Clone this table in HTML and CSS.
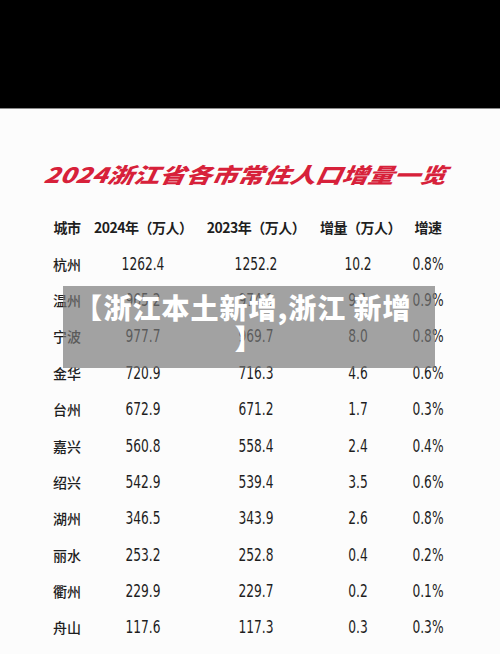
FILE: index.html
```html
<!DOCTYPE html>
<html lang="zh-CN">
<head>
    <meta charset="UTF-8">
    <meta name="viewport" content="width=device-width, initial-scale=1.0">
    <title>2024浙江省各市常住人口增量一览</title>
    <link rel="stylesheet" href="styles.css">
</head>
<body>
    <div class="topbar"></div>
    <div class="sheet">
        <h1 class="title">2024浙江省各市常住人口增量一览</h1>
        <div class="table">
            <div class="row head">
                <span>城市</span>
                <span>2024年（万人）</span>
                <span>2023年（万人）</span>
                <span>增量（万人）</span>
                <span>增速</span>
            </div>
            <div class="row"><span class="city">杭州</span><span>1262.4</span><span>1252.2</span><span>10.2</span><span>0.8%</span></div>
            <div class="row"><span class="city">温州</span><span>965.2</span><span>974.1</span><span>9.1</span><span>0.9%</span></div>
            <div class="row"><span class="city">宁波</span><span>977.7</span><span>969.7</span><span>8.0</span><span>0.8%</span></div>
            <div class="row"><span class="city">金华</span><span>720.9</span><span>716.3</span><span>4.6</span><span>0.6%</span></div>
            <div class="row"><span class="city">台州</span><span>672.9</span><span>671.2</span><span>1.7</span><span>0.3%</span></div>
            <div class="row"><span class="city">嘉兴</span><span>560.8</span><span>558.4</span><span>2.4</span><span>0.4%</span></div>
            <div class="row"><span class="city">绍兴</span><span>542.9</span><span>539.4</span><span>3.5</span><span>0.6%</span></div>
            <div class="row"><span class="city">湖州</span><span>346.5</span><span>343.9</span><span>2.6</span><span>0.8%</span></div>
            <div class="row"><span class="city">丽水</span><span>253.2</span><span>252.8</span><span>0.4</span><span>0.2%</span></div>
            <div class="row"><span class="city">衢州</span><span>229.9</span><span>229.7</span><span>0.2</span><span>0.1%</span></div>
            <div class="row"><span class="city">舟山</span><span>117.6</span><span>117.3</span><span>0.3</span><span>0.3%</span></div>
        </div>
        <div class="caption"><span class="bracket">【</span>浙江本土新增,浙江 新增<br>】</div>
    </div>
</body>
</html>
```

FILE: styles.css
```css
body {
    margin: 0;
    background-color: #fcfcfc;
    font-family: "Noto Sans CJK SC", sans-serif;
    color: #222;
    overflow: hidden;
}
.topbar {
    height: 108px;
    background: #000;
    border-bottom: 1px solid #8a8a8a;
}
.sheet {
    position: relative;
    height: 545px;
    overflow: hidden;
}
.title {
    margin: 0;
    padding-top: 50px;
    height: 30px;
    line-height: 30px;
    font-size: 21px;
    font-weight: 900;
    font-style: italic;
    color: #d7213a;
    text-align: center;
    white-space: nowrap;
    transform: scaleX(1.24) skewX(-8deg);
}
.table {
    margin: 20px 0 0 40px;
}
.row {
    display: grid;
    grid-template-columns: 54px 98px 128px 76px 64px;
    height: 36.4px;
    align-items: center;
    text-align: center;
    font-family: "DejaVu Sans Condensed", "Liberation Sans", "Noto Sans CJK SC", sans-serif;
    font-size: 17px;
    color: #1e1e1e;
}
.row span {
    transform: scaleX(0.8);
}
.row .city {
    font-family: "Noto Sans CJK SC", sans-serif;
    font-size: 14px;
    font-weight: 500;
    transform: none;
}
.head {
    font-family: "Noto Sans CJK SC", sans-serif;
    font-weight: 700;
    font-size: 14px;
    letter-spacing: -0.5px;
}
.row.head span {
    transform: none;
}
.caption {
    position: absolute;
    left: 63px;
    top: 177px;
    width: 372px;
    height: 82px;
    box-sizing: border-box;
    padding-top: 6px;
    background: rgba(120, 120, 120, 0.68);
    color: #fff;
    font-size: 28px;
    font-weight: 900;
    line-height: 31px;
    letter-spacing: 1px;
    text-align: center;
    white-space: nowrap;
}
.bracket {
    margin-left: -12px;
}
```
